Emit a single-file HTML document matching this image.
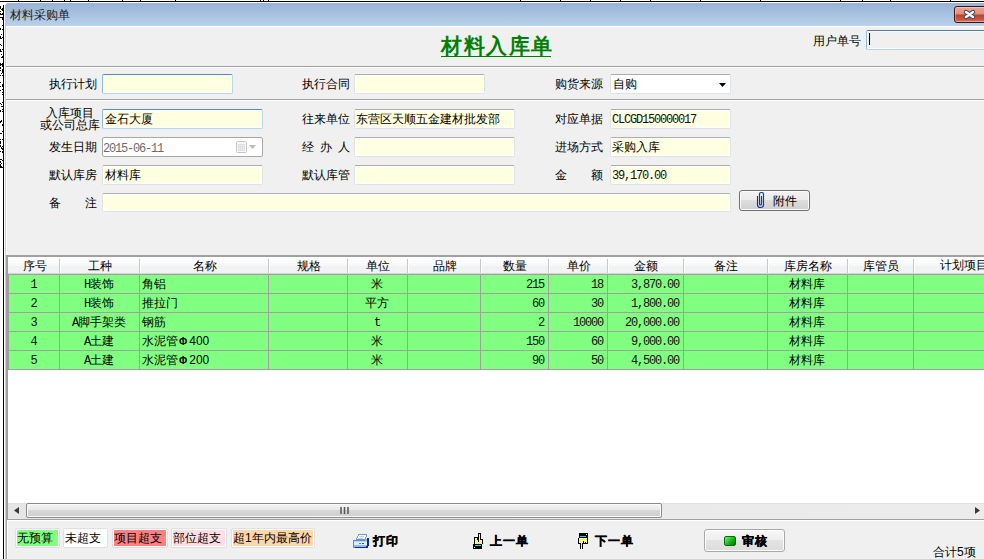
<!DOCTYPE html><html><head><meta charset="utf-8"><style>
*{box-sizing:border-box;margin:0;padding:0}
html,body{width:984px;height:559px;overflow:hidden;background:#fff;font-family:"Liberation Sans",sans-serif;font-size:12px;color:#000}
div{position:absolute;white-space:nowrap}
.l{font-size:12px;line-height:12px}
.m{font-family:"Liberation Mono",monospace;font-size:12px;line-height:12px;letter-spacing:-1.2px;color:#111}
.in{background:#ffffe1;border:1px solid #dfe3ea;border-top-color:#acadb3;border-radius:2px;box-shadow:inset 0 0 0 1px #fff}
.hl{height:1px;background:#a0a0a0;left:6px;width:978px}
.hw{height:1px;background:#fff;left:6px;width:978px}
.gv{width:1px;background:#a0a0a0}
.gh{height:1px;background:#a0a0a0;left:8px;width:976px}
.hs{width:1px;height:14px;top:259px;background:#c8c8c8;border-right:1px solid #fff;width:2px}
.g{background:#80ff80}
.c{text-align:center}
.r{text-align:right}
.mo{font-family:"Liberation Mono",monospace;letter-spacing:-1.2px}
</style></head><body>
<div style="left:0;top:1px;width:984px;height:1px;background:#000"></div>
<svg style="position:absolute;left:0;top:0" width="4" height="200" shape-rendering="crispEdges"><g fill="#000"><rect x="0" y="6" width="1" height="1"/><rect x="0" y="7" width="1" height="1"/><rect x="0" y="8" width="1" height="1"/><rect x="2" y="8" width="1" height="1"/><rect x="1" y="9" width="1" height="1"/><rect x="2" y="9" width="1" height="1"/><rect x="2" y="10" width="1" height="1"/><rect x="0" y="11" width="1" height="1"/><rect x="0" y="13" width="1" height="1"/><rect x="2" y="13" width="1" height="1"/><rect x="0" y="14" width="1" height="1"/><rect x="1" y="14" width="1" height="1"/><rect x="2" y="14" width="1" height="1"/><rect x="0" y="17" width="1" height="1"/><rect x="1" y="17" width="1" height="1"/><rect x="2" y="17" width="1" height="1"/><rect x="2" y="18" width="1" height="1"/><rect x="2" y="19" width="1" height="1"/><rect x="2" y="25" width="1" height="1"/><rect x="0" y="28" width="1" height="1"/><rect x="0" y="29" width="1" height="1"/><rect x="2" y="29" width="1" height="1"/><rect x="1" y="34" width="1" height="1"/><rect x="0" y="36" width="1" height="1"/><rect x="0" y="37" width="1" height="1"/><rect x="2" y="37" width="1" height="1"/><rect x="0" y="38" width="1" height="1"/><rect x="1" y="38" width="1" height="1"/><rect x="0" y="44" width="1" height="1"/><rect x="1" y="45" width="1" height="1"/><rect x="0" y="49" width="1" height="1"/><rect x="2" y="49" width="1" height="1"/><rect x="0" y="50" width="1" height="1"/><rect x="0" y="51" width="1" height="1"/><rect x="1" y="51" width="1" height="1"/><rect x="1" y="54" width="1" height="1"/><rect x="2" y="56" width="1" height="1"/><rect x="1" y="57" width="1" height="1"/><rect x="2" y="57" width="1" height="1"/><rect x="0" y="63" width="1" height="1"/><rect x="2" y="63" width="1" height="1"/><rect x="0" y="64" width="1" height="1"/><rect x="1" y="64" width="1" height="1"/><rect x="2" y="64" width="1" height="1"/><rect x="0" y="65" width="1" height="1"/><rect x="2" y="65" width="1" height="1"/><rect x="2" y="66" width="1" height="1"/><rect x="0" y="67" width="1" height="1"/><rect x="0" y="68" width="1" height="1"/><rect x="2" y="69" width="1" height="1"/><rect x="0" y="70" width="1" height="1"/><rect x="2" y="70" width="1" height="1"/><rect x="2" y="71" width="1" height="1"/><rect x="2" y="72" width="1" height="1"/><rect x="1" y="73" width="1" height="1"/><rect x="0" y="75" width="1" height="1"/><rect x="2" y="75" width="1" height="1"/><rect x="0" y="82" width="1" height="1"/><rect x="2" y="84" width="1" height="1"/><rect x="2" y="85" width="1" height="1"/><rect x="0" y="86" width="1" height="1"/><rect x="2" y="86" width="1" height="1"/><rect x="2" y="89" width="1" height="1"/><rect x="0" y="90" width="1" height="1"/><rect x="2" y="92" width="1" height="1"/><rect x="2" y="94" width="1" height="1"/><rect x="2" y="102" width="1" height="1"/><rect x="0" y="103" width="1" height="1"/><rect x="1" y="104" width="1" height="1"/><rect x="1" y="106" width="1" height="1"/><rect x="2" y="106" width="1" height="1"/><rect x="2" y="109" width="1" height="1"/><rect x="0" y="110" width="1" height="1"/><rect x="0" y="111" width="1" height="1"/><rect x="2" y="111" width="1" height="1"/><rect x="1" y="120" width="1" height="1"/><rect x="0" y="121" width="1" height="1"/><rect x="1" y="121" width="1" height="1"/><rect x="0" y="122" width="1" height="1"/><rect x="2" y="124" width="1" height="1"/><rect x="2" y="125" width="1" height="1"/><rect x="2" y="131" width="1" height="1"/><rect x="0" y="133" width="1" height="1"/><rect x="1" y="133" width="1" height="1"/><rect x="0" y="139" width="1" height="1"/><rect x="2" y="139" width="1" height="1"/><rect x="0" y="141" width="1" height="1"/><rect x="0" y="142" width="1" height="1"/><rect x="0" y="143" width="1" height="1"/><rect x="0" y="145" width="1" height="1"/><rect x="0" y="146" width="1" height="1"/><rect x="2" y="146" width="1" height="1"/><rect x="1" y="147" width="1" height="1"/><rect x="1" y="148" width="1" height="1"/><rect x="2" y="148" width="1" height="1"/><rect x="2" y="149" width="1" height="1"/><rect x="0" y="151" width="1" height="1"/><rect x="2" y="151" width="1" height="1"/><rect x="2" y="152" width="1" height="1"/><rect x="0" y="159" width="1" height="1"/><rect x="1" y="159" width="1" height="1"/><rect x="2" y="160" width="1" height="1"/><rect x="0" y="161" width="1" height="1"/><rect x="0" y="162" width="1" height="1"/><rect x="1" y="163" width="1" height="1"/><rect x="0" y="164" width="1" height="1"/><rect x="0" y="165" width="1" height="1"/><rect x="0" y="166" width="1" height="1"/><rect x="1" y="166" width="1" height="1"/><rect x="0" y="167" width="1" height="1"/><rect x="1" y="167" width="1" height="1"/><rect x="2" y="167" width="1" height="1"/></g></svg>
<div style="left:3px;top:5px;width:1px;height:554px;background:#000"></div>
<svg style="position:absolute;left:0;top:0" width="984" height="2" shape-rendering="crispEdges"><g fill="#000"><rect x="18" y="0" width="1" height="1"/><rect x="40" y="0" width="1" height="1"/><rect x="52" y="0" width="1" height="1"/><rect x="64" y="0" width="1" height="1"/><rect x="70" y="0" width="1" height="1"/><rect x="88" y="0" width="1" height="1"/><rect x="122" y="0" width="1" height="1"/><rect x="140" y="0" width="1" height="1"/><rect x="175" y="0" width="1" height="1"/><rect x="260" y="0" width="1" height="1"/><rect x="263" y="0" width="1" height="1"/><rect x="268" y="0" width="1" height="1"/><rect x="520" y="0" width="1" height="1"/><rect x="560" y="0" width="1" height="1"/><rect x="590" y="0" width="1" height="1"/><rect x="620" y="0" width="1" height="1"/><rect x="650" y="0" width="1" height="1"/><rect x="700" y="0" width="1" height="1"/><rect x="760" y="0" width="1" height="1"/><rect x="840" y="0" width="1" height="1"/><rect x="862" y="0" width="1" height="1"/><rect x="890" y="0" width="1" height="1"/><rect x="950" y="0" width="1" height="1"/></g></svg>
<div style="left:4px;top:2px;width:980px;height:557px;background:#fff;border-top-left-radius:5px"></div>
<div style="left:5px;top:3px;width:979px;height:556px;background:#b9d1ea;border-top-left-radius:4px"></div>
<div style="left:5px;top:3px;width:979px;height:23px;background:linear-gradient(#98b3d5,#b9d1ea);border-top-left-radius:4px"></div>
<div class="l" style="left:10px;top:9px;color:#202020">材料采购单</div>
<div style="left:954px;top:6px;width:34px;height:17px;border:1px solid #3c1418;border-radius:3px;background:linear-gradient(#eaa796 0%,#dd8f7b 48%,#be4125 52%,#c75a43 85%,#d97e66 100%);box-shadow:inset 0 0 0 1px rgba(255,255,255,.35)"></div>
<svg style="position:absolute;left:962px;top:8px" width="15" height="13" viewBox="0 0 15 13"><path d="M4 4 L11 9 M11 4 L4 9" stroke="#3a3f55" stroke-width="4.4" stroke-linecap="round"/><path d="M4 4 L11 9 M11 4 L4 9" stroke="#f4f4f4" stroke-width="2.6" stroke-linecap="round"/></svg>
<div style="left:6px;top:26px;width:978px;height:533px;background:#fff"></div>
<div style="left:7px;top:27px;width:977px;height:532px;background:#f0f0f0"></div>
<div style="left:441px;top:35.5px;font-size:21px;line-height:21px;letter-spacing:1.5px;font-weight:bold;color:#008000;font-family:'Liberation Serif',serif">材料入库单</div>
<div style="left:441px;top:56px;width:110px;height:1px;background:#008000"></div>
<div class="l" style="left:813px;top:35px">用户单号</div>
<div style="left:866px;top:30px;width:130px;height:20px;background:#f0f0f0;border:1px solid #b5d3ee;border-top-color:#3f80b6;border-left-color:#8bbbe6;border-radius:2px;box-shadow:inset 0 0 0 1px #fff"></div>
<div style="left:869px;top:33px;width:1px;height:12px;background:#000"></div>
<div class="hl" style="top:66px"></div><div class="hw" style="top:67px"></div>
<div class="hl" style="top:99px"></div><div class="hw" style="top:100px"></div>
<div class="l" style="left:49px;top:78px">执行计划</div>
<div class="in" style="left:102px;top:74px;width:131px;height:20px;border-color:#b7d7f3;border-top-color:#4f8fcb;border-left-color:#8bbbe6"></div>
<div class="l" style="left:302px;top:78px">执行合同</div>
<div class="in" style="left:354px;top:74px;width:131px;height:20px;"></div>
<div class="l" style="left:555px;top:78px">购货来源</div>
<div class="in" style="left:610px;top:74px;width:121px;height:20px;background:#fff"></div>
<div class="l" style="left:613px;top:78px;">自购</div>
<svg style="position:absolute;left:719px;top:83px" width="7" height="4"><path d="M0 0H7L3.5 4Z" fill="#000"/></svg>
<div class="l" style="left:46px;top:107px">入库项目</div>
<div class="l" style="left:40px;top:119px">或公司总库</div>
<div class="in" style="left:102px;top:109px;width:161px;height:20px;border-color:#b7d7f3;border-top-color:#4f8fcb;border-left-color:#8bbbe6"></div>
<div class="l" style="left:105px;top:113px;">金石大厦</div>
<div class="l" style="left:302px;top:113px">往来单位</div>
<div class="in" style="left:354px;top:109px;width:161px;height:20px;"></div>
<div class="l" style="left:356px;top:113px;">东营区天顺五金建材批发部</div>
<div class="l" style="left:555px;top:113px">对应单据</div>
<div class="in" style="left:610px;top:109px;width:121px;height:20px;"></div>
<div class="m" style="left:612px;top:114px;">CLCGD150000017</div>
<div class="l" style="left:49px;top:141px">发生日期</div>
<div class="x" style="left:102px;top:137px;width:161px;height:20px;background:#fff;border:1px solid #a8a8a8;border-radius:2px;box-shadow:inset 0 0 0 1px #fff"></div>
<div class="m" style="left:103px;top:143px;color:#6d6d6d">2015-06-11</div>
<svg style="position:absolute;left:236px;top:141px" width="12" height="13"><rect x="0.5" y="0.5" width="10" height="11" rx="1" fill="#f6f8fd" stroke="#cbc6c6"/><rect x="2" y="3" width="7" height="7" fill="#dcdfe6"/><path d="M3 4.5h1M5 4.5h1M7 4.5h1M3 6.5h1M5 6.5h1M7 6.5h1M3 8.5h1M5 8.5h1M7 8.5h1" stroke="#f4f6fa" stroke-width="1"/></svg>
<svg style="position:absolute;left:249px;top:145px" width="7" height="4"><path d="M0 0H7L3.5 4Z" fill="#bcbcb4"/></svg>
<div class="l" style="left:302px;top:141px">经</div><div class="l" style="left:320px;top:141px">办</div><div class="l" style="left:338px;top:141px">人</div>
<div class="in" style="left:354px;top:137px;width:161px;height:20px;"></div>
<div class="l" style="left:555px;top:141px">进场方式</div>
<div class="in" style="left:610px;top:137px;width:121px;height:20px;"></div>
<div class="l" style="left:612px;top:141px;">采购入库</div>
<div class="l" style="left:49px;top:169px">默认库房</div>
<div class="in" style="left:102px;top:165px;width:161px;height:20px;"></div>
<div class="l" style="left:105px;top:169px;">材料库</div>
<div class="l" style="left:302px;top:169px">默认库管</div>
<div class="in" style="left:354px;top:165px;width:161px;height:20px;"></div>
<div class="l" style="left:555px;top:169px">金</div><div class="l" style="left:591px;top:169px">额</div>
<div class="in" style="left:610px;top:165px;width:121px;height:20px;"></div>
<div class="m" style="left:612px;top:170px;">39,170.00</div>
<div class="l" style="left:49px;top:197px">备</div><div class="l" style="left:85px;top:197px">注</div>
<div class="in" style="left:102px;top:193px;width:629px;height:19px;"></div>
<div style="left:739px;top:190px;width:71px;height:21px;border:1px solid #707070;border-radius:3px;background:linear-gradient(#f2f2f2 0%,#ebebeb 45%,#dddddd 50%,#cfcfcf 100%);box-shadow:inset 0 0 0 1px #fcfcfc"></div>
<svg style="position:absolute;left:750px;top:188px" width="20" height="24" viewBox="0 0 20 24"><path d="M7.5 8 V17 Q7.5 19.5 10.5 19.5 Q13.5 19.5 13.5 17 V6 Q13.5 4.5 11.5 4.5 H11 Q9.5 4.5 9.5 6 V16 Q9.5 17 10.5 17 Q11.5 17 11.5 16 V8" fill="none" stroke="#0b36b5" stroke-width="1.15"/></svg>
<div class="l" style="left:773px;top:195px;">附件</div>
<div style="left:6px;top:255px;width:978px;height:264px;background:#a0a0a0"></div>
<div style="left:8px;top:257px;width:976px;height:246px;background:#fff"></div>
<div style="left:8px;top:257px;width:976px;height:17px;background:linear-gradient(#ffffff 0%,#f7f8fa 50%,#f1f2f4 51%,#f1f2f4 100%)"></div>
<div style="left:8px;top:273px;width:976px;height:1px;background:#d5d5d5"></div>
<div class="l c" style="left:9px;top:259.5px;width:51px">序号</div>
<div class="hs" style="left:59px"></div>
<div class="l c" style="left:60px;top:259.5px;width:80px">工种</div>
<div class="hs" style="left:139px"></div>
<div class="l c" style="left:140px;top:259.5px;width:129px">名称</div>
<div class="hs" style="left:268px"></div>
<div class="l c" style="left:269px;top:259.5px;width:79px">规格</div>
<div class="hs" style="left:347px"></div>
<div class="l c" style="left:348px;top:259.5px;width:60px">单位</div>
<div class="hs" style="left:407px"></div>
<div class="l c" style="left:408px;top:259.5px;width:73px">品牌</div>
<div class="hs" style="left:480px"></div>
<div class="l c" style="left:481px;top:259.5px;width:68px">数量</div>
<div class="hs" style="left:548px"></div>
<div class="l c" style="left:549px;top:259.5px;width:59px">单价</div>
<div class="hs" style="left:607px"></div>
<div class="l c" style="left:608px;top:259.5px;width:76px">金额</div>
<div class="hs" style="left:683px"></div>
<div class="l c" style="left:684px;top:259.5px;width:84px">备注</div>
<div class="hs" style="left:767px"></div>
<div class="l c" style="left:768px;top:259.5px;width:80px">库房名称</div>
<div class="hs" style="left:847px"></div>
<div class="l c" style="left:848px;top:259.5px;width:66px">库管员</div>
<div class="hs" style="left:913px"></div>
<div class="l" style="left:940px;top:259px">计划项目</div>
<div class="g" style="left:8px;top:274px;width:976px;height:95px"></div>
<div class="gh" style="top:274px"></div>
<div class="gh" style="top:293px"></div>
<div class="gh" style="top:312px"></div>
<div class="gh" style="top:331px"></div>
<div class="gh" style="top:350px"></div>
<div class="gh" style="top:369px"></div>
<div class="gv" style="left:8px;top:274px;height:96px"></div>
<div class="gv" style="left:59px;top:274px;height:96px"></div>
<div class="gv" style="left:139px;top:274px;height:96px"></div>
<div class="gv" style="left:268px;top:274px;height:96px"></div>
<div class="gv" style="left:347px;top:274px;height:96px"></div>
<div class="gv" style="left:407px;top:274px;height:96px"></div>
<div class="gv" style="left:480px;top:274px;height:96px"></div>
<div class="gv" style="left:548px;top:274px;height:96px"></div>
<div class="gv" style="left:607px;top:274px;height:96px"></div>
<div class="gv" style="left:683px;top:274px;height:96px"></div>
<div class="gv" style="left:767px;top:274px;height:96px"></div>
<div class="gv" style="left:847px;top:274px;height:96px"></div>
<div class="gv" style="left:913px;top:274px;height:96px"></div>
<div class="m c" style="left:8px;top:279px;width:51px">1</div>
<div class="l c" style="left:59px;top:278px;width:80px"><span class="mo">H</span>装饰</div>
<div class="l" style="left:142px;top:278px">角铝</div>
<div class="l c" style="left:347px;top:278px;width:60px">米</div>
<div class="m r" style="left:480px;top:279px;width:64px">215</div>
<div class="m r" style="left:548px;top:279px;width:55px">18</div>
<div class="m r" style="left:607px;top:279px;width:72px">3,870.00</div>
<div class="l c" style="left:767px;top:278px;width:80px">材料库</div>
<div class="m c" style="left:8px;top:298px;width:51px">2</div>
<div class="l c" style="left:59px;top:297px;width:80px"><span class="mo">H</span>装饰</div>
<div class="l" style="left:142px;top:297px">推拉门</div>
<div class="l c" style="left:347px;top:297px;width:60px">平方</div>
<div class="m r" style="left:480px;top:298px;width:64px">60</div>
<div class="m r" style="left:548px;top:298px;width:55px">30</div>
<div class="m r" style="left:607px;top:298px;width:72px">1,800.00</div>
<div class="l c" style="left:767px;top:297px;width:80px">材料库</div>
<div class="m c" style="left:8px;top:317px;width:51px">3</div>
<div class="l c" style="left:59px;top:316px;width:80px"><span class="mo">A</span>脚手架类</div>
<div class="l" style="left:142px;top:316px">钢筋</div>
<div class="l c" style="left:347px;top:316px;width:60px"><span class="mo">t</span></div>
<div class="m r" style="left:480px;top:317px;width:64px">2</div>
<div class="m r" style="left:548px;top:317px;width:55px">10000</div>
<div class="m r" style="left:607px;top:317px;width:72px">20,000.00</div>
<div class="l c" style="left:767px;top:316px;width:80px">材料库</div>
<div class="m c" style="left:8px;top:336px;width:51px">4</div>
<div class="l c" style="left:59px;top:335px;width:80px"><span class="mo">A</span>土建</div>
<div class="l" style="left:142px;top:335px">水泥管<span style="font-size:10px;margin:0 2px 0 1px;font-weight:bold">Φ</span>400</div>
<div class="l c" style="left:347px;top:335px;width:60px">米</div>
<div class="m r" style="left:480px;top:336px;width:64px">150</div>
<div class="m r" style="left:548px;top:336px;width:55px">60</div>
<div class="m r" style="left:607px;top:336px;width:72px">9,000.00</div>
<div class="l c" style="left:767px;top:335px;width:80px">材料库</div>
<div class="m c" style="left:8px;top:355px;width:51px">5</div>
<div class="l c" style="left:59px;top:354px;width:80px"><span class="mo">A</span>土建</div>
<div class="l" style="left:142px;top:354px">水泥管<span style="font-size:10px;margin:0 2px 0 1px;font-weight:bold">Φ</span>200</div>
<div class="l c" style="left:347px;top:354px;width:60px">米</div>
<div class="m r" style="left:480px;top:355px;width:64px">90</div>
<div class="m r" style="left:548px;top:355px;width:55px">50</div>
<div class="m r" style="left:607px;top:355px;width:72px">4,500.00</div>
<div class="l c" style="left:767px;top:354px;width:80px">材料库</div>
<div style="left:8px;top:503px;width:976px;height:16px;background:linear-gradient(90deg,#e6e6e6,#ececec)"></div>
<div style="left:8px;top:503px;width:976px;height:1px;background:#e0e0e0"></div>
<svg style="position:absolute;left:14px;top:507px" width="5" height="7"><path d="M5 0V7L0 3.5Z" fill="#3a3a3a"/></svg>
<svg style="position:absolute;left:975px;top:507px" width="5" height="7"><path d="M0 0V7L5 3.5Z" fill="#3a3a3a"/></svg>
<div style="left:26px;top:503px;width:636px;height:15px;border:1px solid #8a8a8a;border-radius:2px;background:linear-gradient(#f4f4f4 0%,#e9e9e9 45%,#d7d7d7 50%,#cfcfcf 100%);box-shadow:inset 0 0 0 1px #fafafa"></div>
<svg style="position:absolute;left:340px;top:507px" width="9" height="7"><path d="M1 0V7M4.5 0V7M8 0V7" stroke="#555" stroke-width="1.5"/></svg>
<div style="left:6px;top:519px;width:978px;height:1px;background:#a0a0a0"></div>
<div style="left:6px;top:520px;width:978px;height:39px;background:#f0f0f0"></div>
<div style="left:6px;top:520px;width:978px;height:1px;background:#fff"></div>
<div style="left:6px;top:520px;width:1px;height:39px;background:#a0a0a0"></div>
<div style="left:7px;top:521px;width:1px;height:38px;background:#fff"></div>
<div style="left:15px;top:528px;width:45px;height:20px;background:#80ff80;border:1px solid #e0e0e0;border-radius:2px;box-shadow:inset 0 0 0 1px #fff"></div>
<div class="l" style="left:17px;top:532px">无预算</div>
<div style="left:63px;top:528px;width:45px;height:20px;background:#ffffff;border:1px solid #e0e0e0;border-radius:2px;box-shadow:inset 0 0 0 1px #fff"></div>
<div class="l" style="left:65px;top:532px">未超支</div>
<div style="left:112px;top:528px;width:56px;height:20px;background:#ff8080;border:1px solid #e0e0e0;border-radius:2px;box-shadow:inset 0 0 0 1px #fff"></div>
<div class="l" style="left:114px;top:532px">项目超支</div>
<div style="left:171px;top:528px;width:56px;height:20px;background:#ffdde4;border:1px solid #e0e0e0;border-radius:2px;box-shadow:inset 0 0 0 1px #fff"></div>
<div class="l" style="left:173px;top:532px">部位超支</div>
<div style="left:231px;top:528px;width:84px;height:20px;background:#fed7aa;border:1px solid #e0e0e0;border-radius:2px;box-shadow:inset 0 0 0 1px #fff"></div>
<div class="l" style="left:233px;top:532px">超1年内最高价</div>
<svg style="position:absolute;left:348px;top:530px" width="24" height="22" shape-rendering="crispEdges"><path d="M10.5 4.5H18.5L17.5 9.5H8.5Z" fill="#fff" stroke="#6b9ad6"/><rect x="11" y="6" width="5" height="1" fill="#d0d0d0"/><rect x="10" y="8" width="5" height="1" fill="#d0d0d0"/><path d="M5.5 10.5H19.5V17.5H5.5Z" fill="#b8d6f4" stroke="#5a8fd0"/><rect x="6" y="12" width="13" height="3" fill="#dceefe"/><rect x="6" y="15" width="13" height="2" fill="#90bce8"/><rect x="19" y="8" width="2" height="8" fill="#0a2c9c"/><rect x="18" y="16" width="2" height="2" fill="#0a2c9c"/><rect x="7" y="17" width="12" height="1" fill="#0a2c9c"/><rect x="17" y="9" width="2" height="2" fill="#8cb4e4"/><rect x="11" y="13" width="2" height="1" fill="#10c010"/><rect x="14" y="13" width="2" height="1" fill="#e01010"/></svg>
<div class="l" style="left:373px;top:535px;font-weight:bold;letter-spacing:1px;-webkit-text-stroke:0.3px">打印</div>
<svg style="position:absolute;left:468px;top:530px" width="22" height="22" shape-rendering="crispEdges"><defs><pattern id="ck" width="2" height="2" patternUnits="userSpaceOnUse"><rect width="2" height="2" fill="#ffff00"/><rect width="1" height="1" fill="#fffff0"/><rect x="1" y="1" width="1" height="1" fill="#fffff0"/></pattern></defs><rect x="10" y="3" width="3" height="11" fill="#000"/><rect x="11" y="4" width="1" height="10" fill="url(#ck)"/><rect x="6" y="7" width="4" height="7" fill="#000"/><rect x="7" y="8" width="2" height="6" fill="url(#ck)"/><rect x="9" y="10" width="1" height="4" fill="url(#ck)"/><rect x="12" y="9" width="3" height="5" fill="#000"/><rect x="12" y="10" width="2" height="4" fill="url(#ck)"/><rect x="7" y="12" width="7" height="2" fill="url(#ck)"/><rect x="5" y="14" width="9" height="5" fill="#000"/><rect x="7" y="15" width="6" height="1" fill="#00e0f0"/><rect x="6" y="17" width="1" height="1" fill="url(#ck)"/></svg>
<div class="l" style="left:490px;top:535px;font-weight:bold;letter-spacing:1px;-webkit-text-stroke:0.3px">上一单</div>
<svg style="position:absolute;left:572px;top:530px" width="22" height="22" shape-rendering="crispEdges"><rect x="7" y="3" width="9" height="5" fill="#000"/><rect x="8" y="6" width="6" height="1" fill="#00e0f0"/><rect x="14" y="4" width="1" height="1" fill="url(#ck)"/><rect x="6" y="8" width="10" height="6" fill="#000"/><rect x="7" y="8" width="8" height="5" fill="url(#ck)"/><rect x="8" y="13" width="3" height="6" fill="#000"/><rect x="9" y="13" width="1" height="6" fill="url(#ck)"/><rect x="11" y="11" width="1" height="3" fill="#000"/><rect x="13" y="12" width="1" height="2" fill="#000"/></svg>
<div class="l" style="left:595px;top:535px;font-weight:bold;letter-spacing:1px;-webkit-text-stroke:0.3px">下一单</div>
<div style="left:704px;top:529px;width:81px;height:23px;border:1px solid #a9a9a9;border-radius:3px;background:linear-gradient(#f7f7f7 0%,#efefef 45%,#e3e3e3 50%,#dcdcdc 100%);box-shadow:inset 0 0 0 1px #fdfdfd"></div>
<div style="left:724px;top:536px;width:12px;height:10px;border-radius:2px;background:linear-gradient(135deg,#7cf07c,#10b010 60%,#087008);border:1px solid #0a6a0a"></div>
<div class="l" style="left:742px;top:535px;font-weight:bold;letter-spacing:1px;-webkit-text-stroke:0.3px">审核</div>
<div class="l" style="left:933px;top:546px">合计5项</div>
</body></html>
